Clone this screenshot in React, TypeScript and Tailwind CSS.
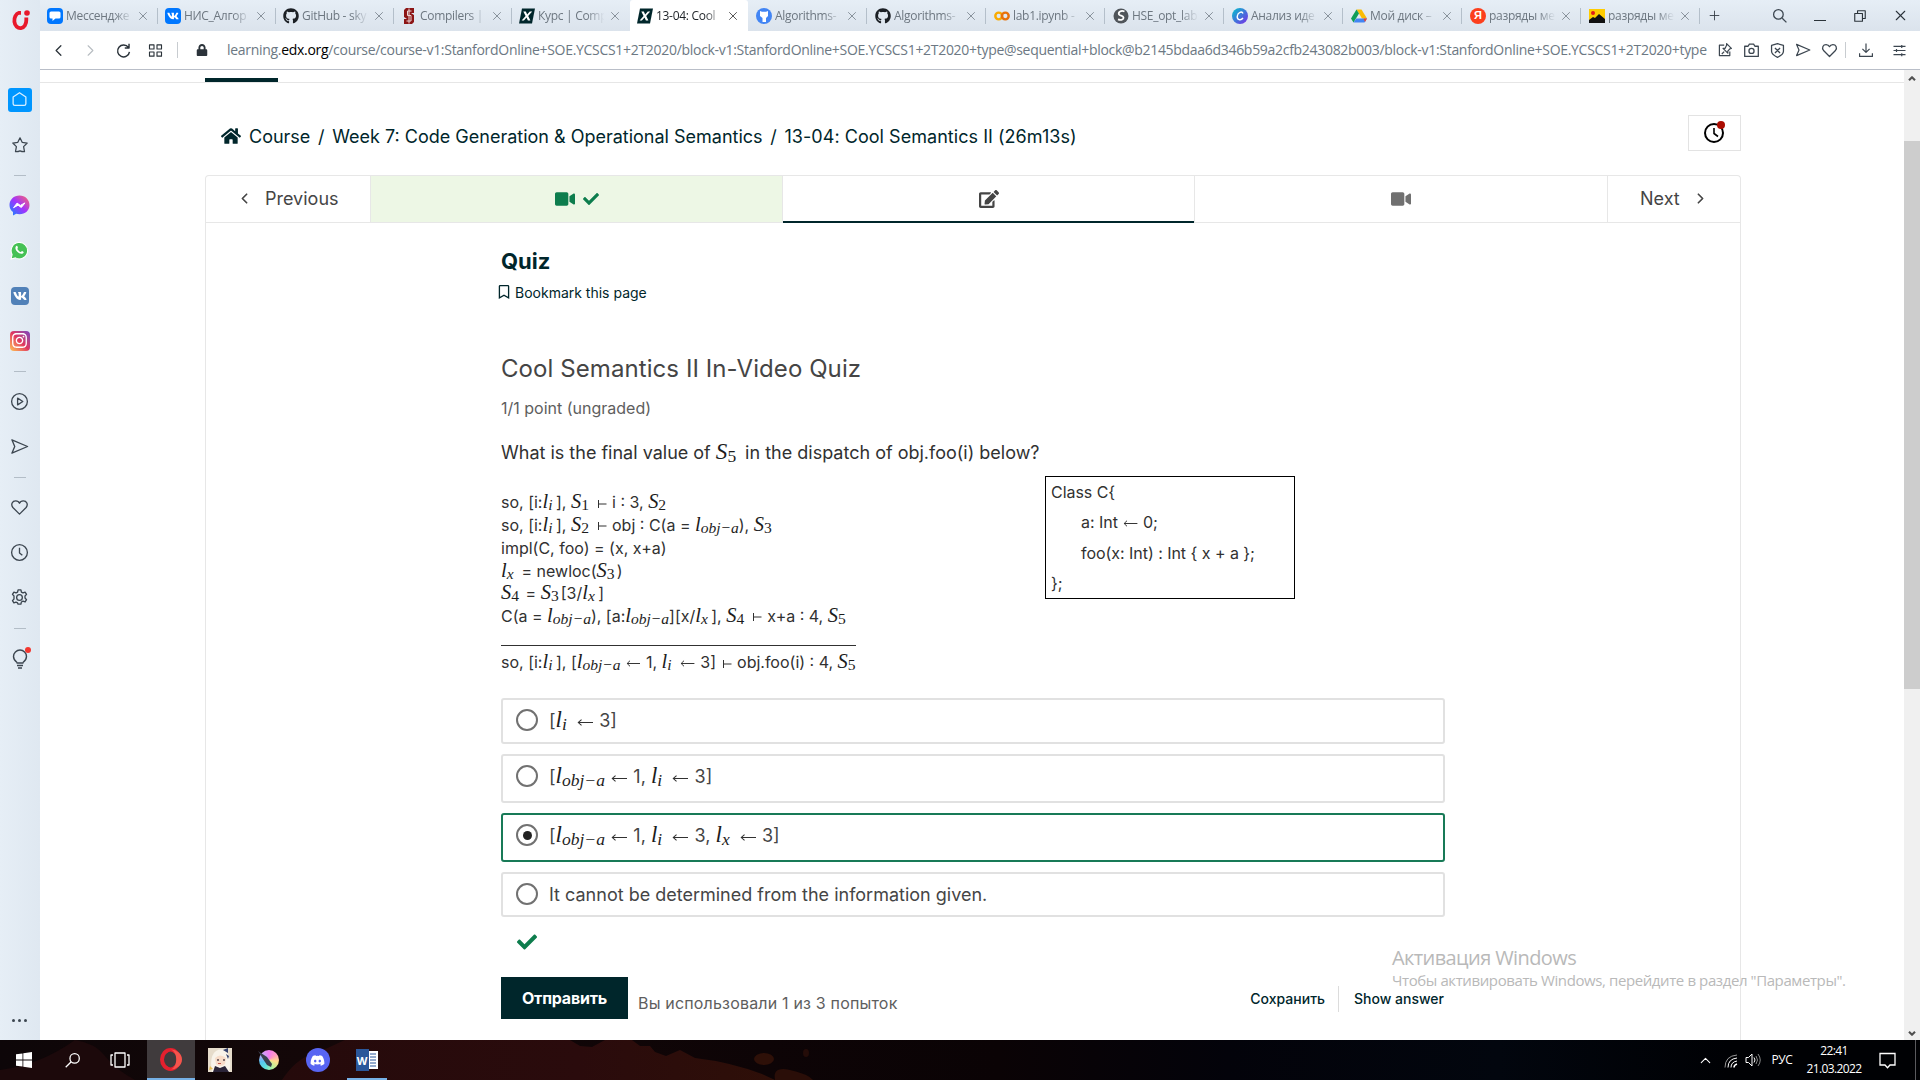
import React from "react";
import {
  FaHome, FaVideo, FaCheck, FaEdit, FaRegBookmark, FaVk, FaInstagram, FaGithub, FaDiscord, FaLock,
} from "react-icons/fa";
import { ChevronLeft, ChevronRight, ChevronUp, X, Plus } from "lucide-react";

const SEGOE = "font-['Open_Sans','Noto_Sans',sans-serif]";

type P = { d: string; s?: number; w?: number; c?: string; children?: React.ReactNode };
const Line = ({ d, s = 20, w = 1.3, c = "#3c4650", children }: P) => (
  <svg width={s} height={s} viewBox="0 0 20 20" fill="none" stroke={c} strokeWidth={w} strokeLinejoin="round">
    <path d={d} />
    {children}
  </svg>
);

const HEART = "M10 17 L3 10 C0.5 6.5 2.5 3 6 3 C8 3 9.5 4.3 10 5.5 C10.5 4.3 12 3 14 3 C17.5 3 19.5 6.5 17 10 Z";
const SEND = "M2 3 L18.5 10 L2 17 L5 10 Z";

const EdxIcon = () => (
  <svg width="16" height="16" viewBox="0 0 16 16">
    <path d="M3 .5H16L13 15.500H0Z" fill="#00262b" />
    <path d="M4.300 3.500h2.500l1.400 3L10.800 3.500h2.400L9.200 8l2.200 4.500H8.900L7.500 9.600 4.900 12.500H2.600l4-4.600z" fill="#fff" />
  </svg>
);

const favicons: Record<string, React.ReactNode> = {
  msg: (
    <span className="flex size-4 items-center justify-center rounded-[4px] bg-[#0077ff]">
      <svg width="12" height="12" viewBox="0 0 12 12" fill="#fff"><path d="M2 1.5h8q1.5 0 1.5 1.5v4q0 1.500-1.500 1.500H6.500L3.500 11V8.500H2Q.5 8.500.5 7V3Q.5 1.500 2 1.500z" /></svg>
    </span>
  ),
  vk: <span className="flex size-4 items-center justify-center rounded-[4px] bg-[#0077ff]"><FaVk size={12} color="#fff" /></span>,
  gh: <FaGithub size={16} color="#1b1f24" />,
  st: (
    <svg width="12" height="16" viewBox="0 0 12 16">
      <path d="M3 0h8v5H8l3 2v7l-2 2H1v-5h3L1 9V2z" fill="#8c1515" />
      <path d="M8.500 3H4.500v4.500h3.500V13H3.500M6 .5v15" stroke="#ead5d5" strokeWidth="1" fill="none" />
    </svg>
  ),
  edx: <EdxIcon />,
  ghb: (
    <span className="flex size-4 items-center justify-center rounded-full bg-[#4285f4]">
      <svg width="10" height="12" viewBox="0 0 10 12" fill="#fff"><path d="M1 1l2 .8h4L9 1v5L7 8v4H3.500V8L1 6z" /></svg>
    </span>
  ),
  colab: (
    <svg width="17" height="16" viewBox="0 0 17 16" fill="none" strokeWidth="2.600">
      <circle cx="5" cy="8" r="3.600" stroke="#f9ab00" /><circle cx="12" cy="8" r="3.600" stroke="#e8710a" />
    </svg>
  ),
  hse: (
    <svg width="16" height="16" viewBox="0 0 16 16">
      <circle cx="8" cy="8" r="7.500" fill="#50555a" />
      <path d="M11.500 3.500C8 2 5 4 6 6.500c1 1.500 4 1 4.500 3 .3 2-2.500 3-5.500 1.800" stroke="#fff" strokeWidth="1.800" fill="none" />
    </svg>
  ),
  canva: (
    <svg width="16" height="16" viewBox="0 0 16 16">
      <defs><linearGradient id="cv" x1="0" y1="0" x2="1" y2="1"><stop offset="0" stopColor="#00c4cc" /><stop offset="1" stopColor="#7d2ae8" /></linearGradient></defs>
      <circle cx="8" cy="8" r="8" fill="url(#cv)" />
      <path d="M11 5.500C10 3 6 4 5.300 8c-.6 4 3.500 5 5.700 2" stroke="#fff" strokeWidth="1.400" fill="none" />
    </svg>
  ),
  drive: (
    <svg width="16" height="16" viewBox="0 0 16 16">
      <path d="M5.500 1.500h5L16 10.500h-5z" fill="#fbbc04" /><path d="M5.500 1.500L0 10.500l2.500 4L8 5.600z" fill="#0f9d58" />
      <path d="M5.300 10.500H16l-2.500 4h-11z" fill="#4285f4" /><path d="M12.500 10.500H16l-2 3.500z" fill="#ea4335" />
    </svg>
  ),
  ya: <span className="flex size-4 items-center justify-center rounded-full bg-[#fc3f1d] font-['Liberation_Sans',sans-serif] text-[11px] font-bold leading-none text-white">Я</span>,
  img: (
    <svg width="16" height="14" viewBox="0 0 16 14">
      <path d="M0 0h16v14H0z" fill="#fc0" /><circle cx="4" cy="4" r="2" fill="#e01b1b" /><path d="M0 14v-3l4-3 2 1 4-4 6 5v4z" fill="#111" />
    </svg>
  ),
};

const tabs: [string, string][] = [
  ["msg", "Мессендже"], ["vk", "НИС_Алгор"], ["gh", "GitHub - sky"], ["st", "Compilers |"], ["edx", "Курс | Comp"],
  ["edx", "13-04: Cool"], ["ghb", "Algorithms-"], ["gh", "Algorithms-"], ["colab", "lab1.ipynb -"], ["hse", "HSE_opt_lab"],
  ["canva", "Анализ иде"], ["drive", "Мой диск –"], ["ya", "разряды ме"], ["img", "разряды ме"],
];

function TabBar() {
  return (
    <div className={"flex h-[31px] bg-gradient-to-b from-[#e6eef6] to-[#dbe3ec] " + SEGOE}>
      {tabs.map(([ic, t], i) => {
        const active = i === 5;
        return (
          <div key={i} className={"flex h-[31px] shrink-0 items-center " + (i < 6 ? "w-[118px] pl-[7px] " : "w-[119px] pl-[8px] ") + (active ? "relative rounded-t-[3px] bg-white" : "")}>
            <span className="flex w-4 shrink-0 justify-center">{favicons[ic]}</span>
            <span className={"ml-[3px] w-[70px] shrink-0 overflow-hidden whitespace-nowrap text-[12px] tracking-[-0.3px] [mask-image:linear-gradient(to_right,#000_70%,transparent_95%)] " + (active ? "text-[#1c2126]" : "text-[#6d7780]")}>{t}</span>
            <X size={14} strokeWidth={1.300} className={"shrink-0 " + (active ? "text-[#222]" : "text-[#6d7780]")} />
            {i !== 4 && !active && <span className="ml-auto h-4 w-px bg-[#b4bfca]" />}
          </div>
        );
      })}
      <div className="flex w-[28px] items-center justify-center"><Plus size={15} strokeWidth={1.400} className="text-[#333c44]" /></div>
      <div className="ml-auto flex items-center">
        <span className="flex w-10 justify-center"><Line d="M12.800 12.800L18 18" s={16} w={1.600}><circle cx="8" cy="8" r="6" /></Line></span>
        <span className="flex w-10 justify-center pt-2.5"><span className="h-[1.5px] w-3 bg-[#2b333a]" /></span>
        <span className="flex w-10 justify-center"><Line d="M2.500 6.500h11v11h-11zM6.500 6.500v-4h11v11h-4" s={14} w={1.600} c="#2b333a" /></span>
        <span className="flex w-10 justify-center"><X size={17} strokeWidth={1.500} className="text-[#2b333a]" /></span>
      </div>
    </div>
  );
}

function Toolbar() {
  return (
    <div className={"flex h-[39px] items-center border-b border-[#b9bec8] bg-white pl-[2px] " + SEGOE}>
      <span className="flex w-8 justify-center"><ChevronLeft size={19} strokeWidth={1.600} className="text-[#2b333a]" /></span>
      <span className="flex w-[33px] justify-center"><ChevronRight size={19} strokeWidth={1.400} className="text-[#b7bcc1]" /></span>
      <span className="flex w-8 justify-center"><Line d="M15.800 6.500A7 7 0 1 0 17 11.500M16.500 2v5h-5" s={17} w={1.700} c="#2b333a" /></span>
      <span className="flex w-8 justify-center"><Line d="M2 2.500h6v5.500H2zM12 2.500h6v5.500h-6zM2 12h6v5.500H2zM12 12h6v5.500h-6z" s={15} w={1.500} c="#2b333a" /></span>
      <span className="ml-[6px] h-4 w-px bg-[#c8ccd0]" />
      <FaLock size={12} className="ml-[18px] shrink-0 text-[#2b333a]" />
      <div className="ml-[19px] w-[1480px] shrink-0 overflow-hidden whitespace-nowrap text-[14px] leading-5 tracking-[-0.3px] text-[#6c7883]">
        learning.<span className="text-black">edx.org</span>/course/course-v1:StanfordOnline+SOE.YCSCS1+2T2020/block-v1:StanfordOnline+SOE.YCSCS1+2T2020+type@sequential+block@b2145bdaa6d346b59a2cfb243082b003/block-v1:StanfordOnline+SOE.YCSCS1+2T2020+type
      </div>
      <div className="ml-auto flex items-center pr-[8px]">
        <span className="flex w-[26px] justify-center"><Line d="M9 4H3v13h13v-5M12 2l6 6-2 .5-2.500 3 0 2.500-6-6 2.500 0L12 4zM9 12l-3 3" s={16} w={1.500} /></span>
        <span className="flex w-[26px] justify-center"><Line d="M2 5h4l1.500-2.500h5L14 5h4v12H2z" s={17} w={1.500}><circle cx="10" cy="10.500" r="3" /></Line></span>
        <span className="flex w-[26px] justify-center"><Line d="M10 2l7 2v7q0 4-7 7-7-3-7-7V4zM7 7l6 6M13 7l-6 6" s={17} w={1.500} /></span>
        <span className="flex w-[26px] justify-center"><Line d={SEND} s={16} w={1.500} /></span>
        <span className="flex w-[26px] justify-center"><Line d={HEART} s={17} w={1.500} /></span>
        <span className="mx-[3px] h-4 w-px bg-[#c8ccd0]" />
        <span className="flex w-[33px] justify-center"><Line d="M10 2v11M5.500 8.500L10 13l4.500-4.500M2 14v4h16v-4" s={16} w={1.500} /></span>
        <span className="flex w-[30px] justify-center pl-1"><Line d="M2 4.500h16M2 10h16M2 15.500h16M13 2.500v4M6 8v4M13 13.500v4" s={15} w={1.600} /></span>
      </div>
    </div>
  );
}

const Slot = ({ children }: { children: React.ReactNode }) => <div className="flex h-[45px] w-full items-center justify-center">{children}</div>;
const Dash = () => <div className="mb-[7.5px] mt-[7.5px] h-px w-3 bg-[#b3bdc7]" />;

function Sidebar() {
  return (
    <div className="flex w-10 shrink-0 flex-col items-center bg-gradient-to-r from-[#e6eef6] to-[#dfe8f1] pr-px">
      <div className="flex h-[77px] items-start justify-center pt-[9px]">
        <svg width="22" height="22" viewBox="0 0 22 22" fill="none">
          <path d="M12 3.800H10A6 7.800 0 1 0 17.300 11V8.500" stroke="#e8192c" strokeWidth="3.800" />
          <circle cx="18" cy="4" r="2.800" fill="#e8192c" />
        </svg>
      </div>
      <Slot><span className="flex size-6 items-center justify-center rounded-[3px] bg-[#0096ff]"><Line d="M10 2l7.500 5v8q0 2-2 2h-11q-2 0-2-2V7z" s={17} w={1.500} c="#d8efff" /></span></Slot>
      <Slot><Line d="M10 2l2.400 5 5.600.8-4 4 1 5.500q-2 .5-5-.8-3 1.300-5 .8l1-5.500-4-4L7.600 7z" s={18} w={1.400} /></Slot>
      <Dash />
      <Slot>
        <svg width="21" height="21" viewBox="0 0 21 21">
          <defs><linearGradient id="ms" x1="0" y1="1" x2="1" y2="0"><stop offset="0" stopColor="#0a8cff" /><stop offset=".5" stopColor="#a033ff" /><stop offset="1" stopColor="#ff6a68" /></linearGradient></defs>
          <path d="M10.500.5C4.800.5.500 4.700.500 10c0 3 1.300 5.500 3.500 7v3.500l3.200-1.700c1 .3 2.100.5 3.300.5 5.700 0 10-4 10-9.300S16.200.5 10.500.5z" fill="url(#ms)" />
          <path d="M4.500 12.700l3.600-4.600 3.200 2.300 4.700-2.500-3.700 4.600-3.200-2.300z" fill="#fff" stroke="#fff" strokeLinejoin="round" />
        </svg>
      </Slot>
      <Slot>
        <svg width="19" height="19" viewBox="0 0 18 18">
          <path d="M1 17l1-4.200A7.800 7.800 0 1 1 5.200 16z" fill="#45c155" stroke="#fff" strokeWidth="1" />
          <path d="M5.500 5.300c.8-1.200 1.500-.8 1.900.6.4 1-.8 1.200-.3 2 .7 1.200 1.500 2 2.800 2.500.9.200 1-1.200 1.900-.8 1.400.6 1.500 1 .6 2-1.400 1.300-4 .2-5.500-1.300C5.300 8.800 4.600 6.700 5.500 5.300z" fill="#fff" />
        </svg>
      </Slot>
      <Slot><span className="flex size-[18px] items-center justify-center rounded-[4px] bg-[#5181b8]"><FaVk size={14} color="#fff" /></span></Slot>
      <Slot><span className="flex size-5 items-center justify-center rounded-[4px] bg-gradient-to-tr from-[#fdc04d] via-[#e0345f] to-[#7a3cc0]"><FaInstagram size={17} color="#fff" /></span></Slot>
      <Dash />
      <Slot><Line d="M8 6.500l5.500 3.500L8 13.500z" s={19} w={1.400}><circle cx="10" cy="10" r="8.300" /></Line></Slot>
      <Slot><Line d={SEND} s={19} w={1.400} /></Slot>
      <Dash />
      <Slot><Line d={HEART} s={19} w={1.400} /></Slot>
      <Slot><Line d="M10 5v5.500l3 2.500" s={19} w={1.400}><circle cx="10" cy="10" r="8.300" /></Line></Slot>
      <Slot>
        <Line d="M8.500 2h3l.5 2.300 1.700.9 2.200-.9 1.500 2.400-1.600 1.700v2.200l1.600 1.700-1.500 2.400-2.200-.9-1.700.9-.5 2.300h-3L8 15.700l-1.700-.9-2.200.9-1.500-2.400 1.600-1.700V8.400L2.600 6.700l1.500-2.400 2.200.9L8 4.300z" s={19} w={1.400}><circle cx="10" cy="10" r="3" /></Line>
      </Slot>
      <Dash />
      <Slot>
        <span className="relative flex">
          <Line d="M7 13.500C5 12 3.500 10.500 3.500 7.500a6.500 6.500 0 0 1 13 0c0 3-1.500 4.500-3.500 6M6.500 14h7M7 16.500h6M8 19h4" s={20} w={1.400} />
          <span className="absolute -right-[1px] -top-[2px] size-[6px] rounded-full bg-[#f3372f]" />
        </span>
      </Slot>
      <div className="mt-auto flex h-10 items-center gap-[3px]">
        <span className="size-[3px] rounded-full bg-[#3c4650]" /><span className="size-[3px] rounded-full bg-[#3c4650]" /><span className="size-[3px] rounded-full bg-[#3c4650]" />
      </div>
    </div>
  );
}

/* Math variable with a subscript. */
const M = ({ b, s, w }: { b: string; s: string; w: string }) => (
  <span className={"inline-block whitespace-nowrap font-['Liberation_Serif',serif] text-[1.28em] italic leading-[0] tracking-normal text-[#1c1c1c] " + w}>
    {b}<span className={"relative top-[0.16em] text-[0.76em] " + (/\d/.test(s) ? "not-italic" : "")}>{s}</span>
  </span>
);
const S = ({ n }: { n: string }) => <M b="S" s={n} w="w-[0.98em]" />;
const Li = () => <M b="l" s="i" w="w-[0.66em]" />;
const Lx = () => <M b="l" s="x" w="w-[0.78em]" />;
const Lo = () => <M b="l" s="obj−a" w="w-[2.14em]" />;
const Turn = () => (
  <svg className="mx-px inline-block" width="10" height="10" viewBox="0 0 10 10" stroke="#313131"><path d="M1.500 1v8M1.500 5H9.500" /></svg>
);
const Arr = () => (
  <svg className="mx-[0.06em] inline-block h-[9px] w-[0.9em]" viewBox="0 0 15 9" preserveAspectRatio="none" stroke="#313131" fill="none"><path d="M1 4.500H15M4.200 1.700L1.200 4.500L4.200 7.300" /></svg>
);

const Row = ({ h, children }: { h: string; children: React.ReactNode }) => <div className={"flex items-center whitespace-pre " + h}><div>{children}</div></div>;

function Option({ h, on, children }: { h: string; on?: boolean; children: React.ReactNode }) {
  return (
    <div className={"mb-[10px] flex items-start rounded-[3px] border-2 pl-[13px] pt-[9px] " + h + (on ? " border-[#187a57]" : " border-[#e1e1e1]")}>
      <span className="flex size-[22px] shrink-0 items-center justify-center rounded-full border-2 border-[#717171]">
        {on && <span className="size-[9px] rounded-full bg-[#222]" />}
      </span>
      <div className="ml-[11px] h-[23px] whitespace-pre text-[18px] leading-[24px] text-[#454545]">{children}</div>
    </div>
  );
}

function Problem() {
  return (
    <div className="ml-[295px] flex w-[944px] flex-col text-[#313131]">
      <h2 className="mt-[24px] text-[22px] font-bold leading-[28px] text-[#00262b]">Quiz</h2>
      <div className="-ml-[4px] mt-[7px] flex h-[20px] items-center text-[14px] text-[#00262b]"><FaRegBookmark size={14} /><span className="ml-[4px]">Bookmark this page</span></div>
      <h3 className="mt-[51px] text-[24px] leading-[32px] tracking-[0.08px] text-[#454545]">Cool Semantics II In-Video Quiz</h3>
      <div className="mt-[13px] text-[16px] leading-[20px] text-[#5e5e5e]">1/1 point (ungraded)</div>
      <div className="mt-[23px] h-[24px] whitespace-pre text-[18px] leading-[24px]">What is the final value of <M b="S" s="5" w="w-[1.05em]" /> in the dispatch of obj.foo(i) below?</div>
      <div className="mt-[11px] flex">
        <div className="mt-[15px] w-[544px] text-[16px] leading-none">
          <Row h="h-[22px]">so, [i:<Li />], <S n="1" /> <Turn /> i : 3, <S n="2" /></Row>
          <Row h="h-[23px]">so, [i:<Li />], <S n="2" /> <Turn /> obj : C(a = <Lo />), <S n="3" /></Row>
          <Row h="h-[23px]">impl(C, foo) = (x, x+a)</Row>
          <Row h="h-[23px]"><Lx /> = newloc(<S n="3" />)</Row>
          <Row h="h-[22px]"><S n="4" /> = <S n="3" />[3/<Lx />]</Row>
          <Row h="h-[23px]">C(a = <Lo />), [a:<Lo />][x/<Lx />], <S n="4" /> <Turn /> x+a : 4, <S n="5" /></Row>
          <div className="mb-[4px] h-[19px] w-[355px] border-b border-[#313131]" />
          <Row h="h-[24px]">so, [i:<Li />], [<Lo /> <Arr /> 1, <Li /> <Arr /> 3] <Turn /> obj.foo(i) : 4, <S n="5" /></Row>
        </div>
        <div className="h-[123px] w-[250px] whitespace-pre border border-black pl-[5px] text-[16px] leading-[30.3px] tracking-[-0.04px]">
          <div>Class C{"{"}</div>
          <div className="pl-[30px]">a: Int <Arr /> 0;</div>
          <div className="pl-[30px]">foo(x: Int) : Int {"{"} x + a {"}"};</div>
          <div>{"}"};</div>
        </div>
      </div>
      <div className="mt-[24px]">
        <Option h="h-[46px]">[<Li /> <Arr /> 3]</Option>
        <Option h="h-[49px]">[<Lo /> <Arr /> 1, <Li /> <Arr /> 3]</Option>
        <Option h="h-[49px]" on>[<Lo /> <Arr /> 1, <Li /> <Arr /> 3, <Lx /> <Arr /> 3]</Option>
        <Option h="h-[45px]">It cannot be determined from the information given.</Option>
      </div>
      <FaCheck size={20} className="ml-[16px] mt-[5px] text-[#0d7d4d]" />
      <div className="mt-[25px] flex h-[42px] items-center">
        <div className="flex h-[42px] w-[127px] items-center justify-center bg-[#00262b] text-[16px] font-bold tracking-[-0.2px] text-white">Отправить</div>
        <div className="ml-[10px] mt-[10px] text-[16px] tracking-[0.18px] text-[#5e5e5e]">Вы использовали 1 из 3 попыток</div>
        <div className="ml-auto mt-px flex items-center pr-px text-[14px] font-medium text-[#00262b]">
          <span>Сохранить</span><span className="ml-[13px] mr-[15px] h-[26px] w-px bg-[#dcdcdc]" /><span>Show answer</span>
        </div>
      </div>
    </div>
  );
}

function Page() {
  return (
    <div className="flex h-[970px] bg-white font-['Inter',sans-serif]">
      <div className="flex min-w-0 flex-1 flex-col">
        <div className="h-[13px] border-b border-[#e6e6e6] pl-[165px] pt-[8px]"><div className="h-[4px] w-[73px] bg-[#00262b]" /></div>
        <div className="ml-[165px] flex h-[92px] w-[1536px] items-center justify-between pt-[8px]">
          <div className="flex items-center whitespace-pre pl-[16px] pt-[6px] text-[18px] text-[#00262b]">
            <FaHome size={20} /><span className="ml-[8px]">Course</span><span className="mx-[7.7px]">/</span><span>Week 7: Code Generation &amp; Operational Semantics</span><span className="mx-[7.7px]">/</span><span className="tracking-[0.04px]">13-04: Cool Semantics II (26m13s)</span>
          </div>
          <div className="flex h-[36px] w-[53px] items-center justify-center border border-[#e3e3e3] pr-[2px]">
            <span className="relative flex">
              <svg width="22" height="22" viewBox="0 0 22 22" fill="none" stroke="#000" strokeWidth="2"><circle cx="11" cy="11" r="9" /><path d="M11 6v5.500l4 3" strokeWidth="1.600" /></svg>
              <span className="absolute -top-px right-0 size-2 rounded-full bg-[#ab0d02]" />
            </span>
          </div>
        </div>
        <div className="ml-[165px] flex min-h-0 w-[1536px] flex-1 flex-col overflow-hidden rounded-t-[4px] border border-b-0 border-[#e7e7e7]">
          <div className="flex h-[47px] shrink-0 text-[18px] text-[#454545]">
            <div className="flex w-[165px] items-center border-b border-r border-[#e7e7e7] pb-[2px] pl-[30px]"><ChevronLeft size={17} strokeWidth={2.400} /><span className="ml-[12px]">Previous</span></div>
            <div className="flex w-[412px] items-center justify-center gap-[8px] border-b border-r border-[#e7e7e7] bg-[#edf7e5] text-[#0d7d4d]"><FaVideo size={20} /><FaCheck size={16} /></div>
            <div className="flex w-[411px] items-center justify-center border-b-2 border-[#00262b]"><FaEdit size={20} /></div>
            <div className="flex w-[414px] items-center justify-center border-x border-b border-[#e7e7e7] text-[#707070]"><FaVideo size={20} /></div>
            <div className="flex flex-1 items-center border-b border-[#e7e7e7] pb-[2px] pl-[32px]"><span>Next</span><ChevronRight size={17} strokeWidth={2.400} className="ml-[12px]" /></div>
          </div>
          <Problem />
        </div>
      </div>
      <div className="flex w-4 flex-col items-center bg-[#f0f0f0]">
        <div className="flex h-[71px] pt-[3px]"><Line d="M5 12l5-5 5 5" s={12} w={3.500} c="#505050" /></div>
        <div className="h-[548px] w-4 bg-[#cdcdcd]" />
        <div className="mt-auto pb-[1px]"><Line d="M5 8l5 5 5-5" s={12} w={3.500} c="#505050" /></div>
      </div>
    </div>
  );
}

function Taskbar() {
  return (
    <div className={"relative isolate flex h-10 bg-[linear-gradient(90deg,#0d0608_0%,#140708_18%,#0d0406_40%,#0a0305_52%,#03030a_64%,#02060e_78%,#000104_90%)] text-white " + SEGOE}>
      <svg className="absolute left-0 top-0 -z-10" width="830" height="40" viewBox="0 0 830 40">
        <defs><linearGradient id="splash" x1="0" x2="1"><stop offset="0" stopColor="#250a0b" /><stop offset=".6" stopColor="#2a0b0c" /><stop offset="1" stopColor="#2e0f08" /></linearGradient></defs>
        <path d="M75 0Q95 3 105 16T135 40H0V30Q40 25 75 0z" fill="#1c090b" />
        <path d="M282 40Q295 20 312 14T345 0H570L580 6L592 7L605 0H632L640 6H650L655 12L666 16L680 10L695 18Q730 22 762 34L775 40z" fill="url(#splash)" />
        <path d="M775 40Q772 26 790 30T813 40z" fill="#2a0e08" /><ellipse cx="764" cy="19" rx="10" ry="6" fill="#2e1008" />
        <ellipse cx="806" cy="13" rx="3" ry="4" fill="#240c08" />
      </svg>
      <div className="flex w-12 items-center justify-center"><svg width="16" height="16" viewBox="0 0 16 16" fill="#fff"><path d="M0 2.300L6.500 1.400V7.600H0zM7.300 1.300L16 0V7.600H7.300zM0 8.400H6.500V14.600L0 13.700zM7.300 8.400H16V16L7.300 14.700z" /></svg></div>
      <div className="flex w-12 items-center justify-center"><Line d="M8.500 11.500L2 18" s={17} w={1.500} c="#fff"><circle cx="12.500" cy="7.500" r="5.500" /></Line></div>
      <div className="flex w-12 items-center justify-center"><Line d="M5 3h10v14H5zM3 5H1v10h2M17 5h2v10h-2" s={20} w={1.300} c="#fff" /></div>
      <div className="ml-[3px] flex w-12 items-center justify-center border-b-2 border-[#76b1e6] bg-[#403b3d] pr-px">
        <svg width="23" height="23" viewBox="0 0 23 23"><ellipse cx="11.500" cy="11.500" rx="8.500" ry="9.500" fill="none" stroke="#e5202e" strokeWidth="4" /><path d="M12 1.500a11 10 0 0 1 0 20c7-3 7-17 0-20z" fill="#f5544c" /><ellipse cx="11.500" cy="11.500" rx="4.500" ry="8" fill="#403b3d" /></svg>
      </div>
      <div className="flex w-[49px] items-center justify-center">
        <svg width="24" height="24" viewBox="0 0 24 24">
          <path d="M0 0h24v24H0z" fill="#e6dccb" /><path d="M4 24Q1 8 8 3q7-4 12 3 4 8 1 18z" fill="#f8f3ea" /><path d="M7 10q5-5 11 0l-1 6q-5 4-9 0z" fill="#f7dcc9" />
          <path d="M5 24l2-6 5 2 5-2 4 6z" fill="#2a2438" /><path d="M15 2l5-2v5zM18 6l3 2-1 3z" fill="#34426e" /><path d="M9 12h2M15 12h2" stroke="#5a4a50" strokeWidth="1.500" /><path d="M10 15.500h3" stroke="#c4594c" /><path d="M2 18l3 3-4 1z" fill="#e5bd55" />
        </svg>
      </div>
      <div className="flex w-[49px] items-center justify-center">
        <span className="relative flex size-5 rounded-full bg-[conic-gradient(#f47af0,#ff9ac0,#ffe08a,#b6f29a,#5fe3dc,#58c5f0,#c7a6f5,#f47af0)]">
          <svg className="absolute -left-[2px] top-0" width="20" height="20" viewBox="0 0 20 20"><path d="M1 1l9 6 5 7-1 3-4-2-4-6z" fill="#3b3f4c" /></svg>
        </span>
      </div>
      <div className="flex w-[49px] items-center justify-center"><span className="flex size-6 items-center justify-center rounded-full bg-[#5865f2]"><FaDiscord size={15} color="#fff" /></span></div>
      <div className="ml-[5px] flex w-10 items-center justify-center border-b-2 border-[#76b1e6] pr-px pt-[2px]">
        <div className="flex items-center">
          <span className="flex h-[22px] w-[13px] items-center justify-center bg-[#2b579a] text-[11px] font-bold leading-none">W</span>
          <svg width="9" height="18" viewBox="0 0 9 18"><path d="M0 0h9v18H0z" fill="#fff" /><path d="M1 3h6M1 6h6M1 9h6M1 12h6M1 15h6" stroke="#2b579a" /></svg>
        </div>
      </div>
      <div className="ml-auto flex items-center">
        <ChevronUp size={17} strokeWidth={1.500} />
        <svg className="ml-[9px]" width="16" height="15" viewBox="0 0 16 15" fill="none" stroke="#fff"><path d="M2 14.500Q2 3 14 2" stroke="#999" /><path d="M5 14.500Q5 6 14 5M8 14.500Q8 9 14 8" /><path d="M11 14.500Q11 12 14 11" strokeWidth="1.500" /></svg>
        <svg className="ml-[6px]" width="17" height="16" viewBox="0 0 17 16" fill="none" stroke="#fff"><path d="M1 5.500h2.500L7 2v12l-3.500-3.500H1zM9 5.500q2 2.500 0 5" /><path d="M11 4q3 4 0 8M13 2q4.500 6 0 12" stroke="#888" /></svg>
        <span className="ml-[8px] w-[24px] text-center text-[12px] tracking-[-0.4px]">РУС</span>
        <div className="ml-[8px] w-[64px] text-center text-[12px] leading-[18px] tracking-[-0.6px]"><div>22:41</div><div>21.03.2022</div></div>
        <svg className="ml-[13px]" width="17" height="17" viewBox="0 0 17 17" fill="none" stroke="#fff" strokeWidth="1.300"><path d="M1 1.500h15v11.500h-5L8.500 15.800 6 13H1z" /></svg>
        <span className="ml-[19px] mr-[4px] h-10 w-px bg-[#5a5a5e]" />
      </div>
    </div>
  );
}

export default function App() {
  return (
    <div className="relative flex h-[1080px] w-[1920px] flex-col overflow-hidden">
      <div className="flex h-[1040px]">
        <Sidebar />
        <div className="flex min-w-0 flex-1 flex-col"><TabBar /><Toolbar /><Page /></div>
      </div>
      <Taskbar />
      <div className={"pointer-events-none absolute left-[1392px] top-[944px] whitespace-nowrap text-[#b9b9b9] " + SEGOE}>
        <div className="text-[20px] leading-[28px] tracking-[-0.6px]">Активация Windows</div>
        <div className="-mt-px text-[15px] leading-[18px] tracking-[-0.4px]">Чтобы активировать Windows, перейдите в раздел "Параметры".</div>
      </div>
    </div>
  );
}
